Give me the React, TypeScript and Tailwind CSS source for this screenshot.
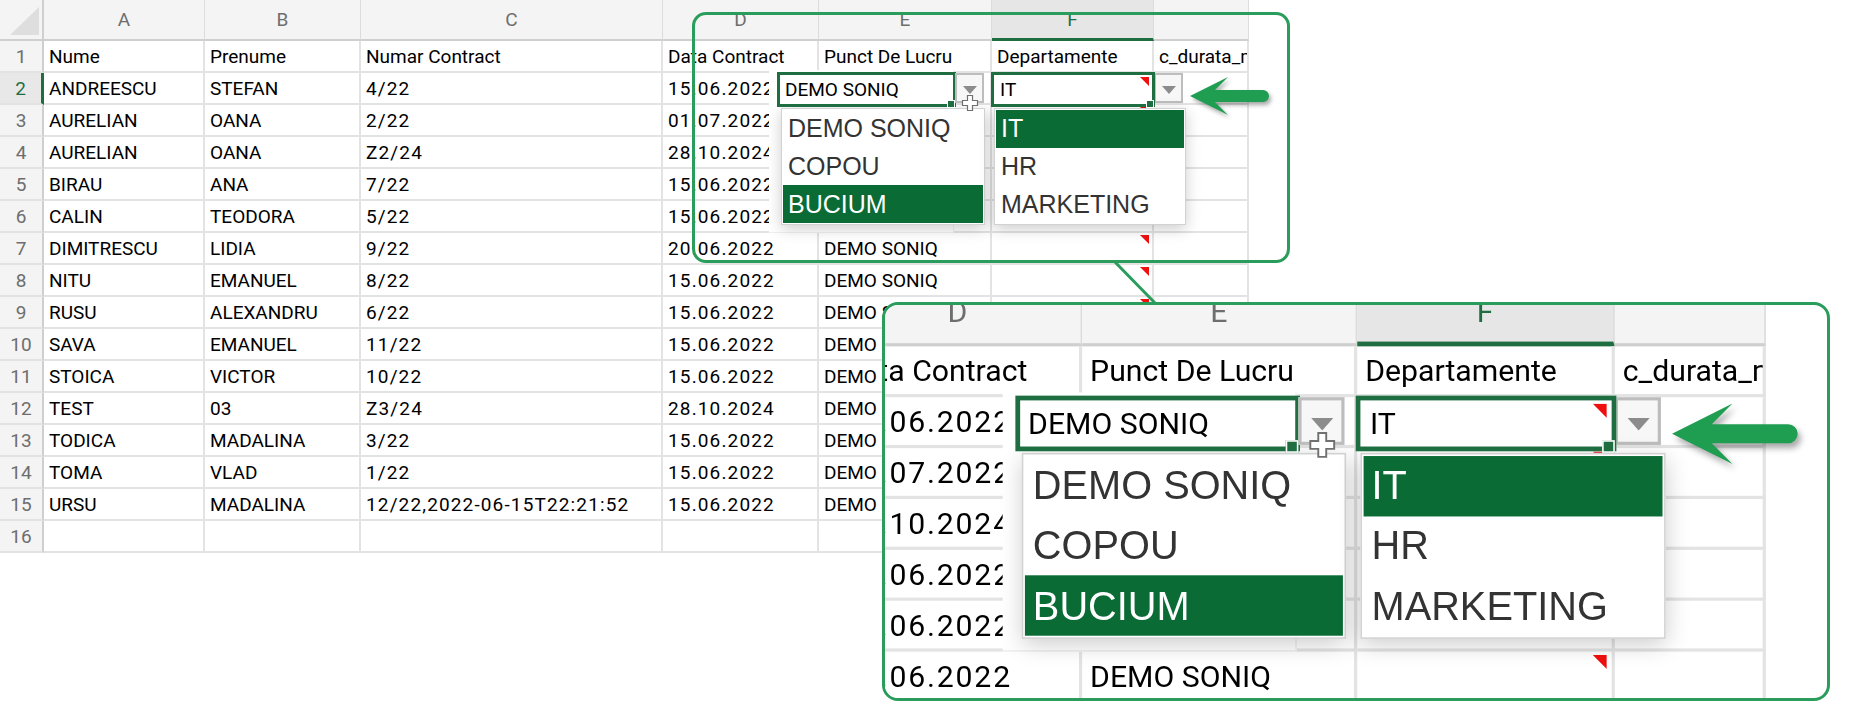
import React from 'react';

type Row = [string, string, string, string, string, string, string];

const rows: Row[] = [
  ['Nume', 'Prenume', 'Numar Contract', 'Data Contract', 'Punct De Lucru', 'Departamente', 'c_durata_munca'],
  ['ANDREESCU', 'STEFAN', '4/22', '15.06.2022', 'DEMO SONIQ', 'IT', ''],
  ['AURELIAN', 'OANA', '2/22', '01.07.2022', 'DEMO SONIQ', '', ''],
  ['AURELIAN', 'OANA', 'Z2/24', '28.10.2024', 'DEMO SONIQ', '', ''],
  ['BIRAU', 'ANA', '7/22', '15.06.2022', 'DEMO SONIQ', '', ''],
  ['CALIN', 'TEODORA', '5/22', '15.06.2022', 'DEMO SONIQ', '', ''],
  ['DIMITRESCU', 'LIDIA', '9/22', '20.06.2022', 'DEMO SONIQ', '', ''],
  ['NITU', 'EMANUEL', '8/22', '15.06.2022', 'DEMO SONIQ', '', ''],
  ['RUSU', 'ALEXANDRU', '6/22', '15.06.2022', 'DEMO SONIQ', '', ''],
  ['SAVA', 'EMANUEL', '11/22', '15.06.2022', 'DEMO SONIQ', '', ''],
  ['STOICA', 'VICTOR', '10/22', '15.06.2022', 'DEMO SONIQ', '', ''],
  ['TEST', '03', 'Z3/24', '28.10.2024', 'DEMO SONIQ', '', ''],
  ['TODICA', 'MADALINA', '3/22', '15.06.2022', 'DEMO SONIQ', '', ''],
  ['TOMA', 'VLAD', '1/22', '15.06.2022', 'DEMO SONIQ', '', ''],
  ['URSU', 'MADALINA', '12/22,2022-06-15T22:21:52', '15.06.2022', 'DEMO SONIQ', '', ''],
  ['', '', '', '', '', '', ''],
];

// G header letter is cropped out in the screenshot
const letters = ['A', 'B', 'C', 'D', 'E', 'F', ''];

function RedMark() {
  return <div className="absolute right-[3px] top-[2px] h-[9px] w-[9px] bg-[#f00f0f] [clip-path:polygon(0_0,100%_0,100%_100%)]" />;
}

function Handle() {
  return <div className="absolute -right-[2px] -bottom-[4px] h-[8px] w-[8px] bg-[#1e6e42] border border-white" />;
}

function DropButton() {
  return (
    <div className="-ml-px mt-px h-[30px] w-[29px] shrink-0 border-2 border-[#bdbdbd] bg-[#f7f7f7] flex justify-center pt-[11px]">
      <svg width="14" height="8" viewBox="0 0 14 8">
        <polygon points="0,0 14,0 7,8" fill="#8c8c8c" />
      </svg>
    </div>
  );
}

function List({ items, active, width }: { items: string[]; active: number; width: string }) {
  return (
    <div className={`h-[117px] bg-white border border-[#d2d2d2] shadow-[0_4px_14px_rgba(0,0,0,0.2)] p-px flex flex-col font-['Liberation_Sans',Arial,sans-serif] text-[25px] text-[#333333] ${width}`}>
      {items.map((it, i) => (
        <div key={it} className={`h-[38px] flex items-center pl-[5px] ${i === active ? 'bg-[#0a6b35] text-white' : ''}`}>
          {it}
        </div>
      ))}
    </div>
  );
}

function Overlays() {
  return (
    <>
      {/* pasted dropdown patch */}
      <div className="absolute left-[769px] top-[70px] h-[163px] w-[185px] bg-white border-r border-b border-[#f0f0f0]" />

      {/* E2 in-cell dropdown */}
      <div className="absolute left-[777px] top-[72px] flex flex-col">
        <div className="flex items-start">
          <div className="relative h-[35px] w-[179px] border-[3px] border-[#1e6e42] bg-white flex items-center pl-[5px] text-black">
            DEMO SONIQ
            <Handle />
          </div>
          <div className="relative">
            <DropButton />
            <svg className="absolute left-[5px] top-[22px]" width="18" height="18" viewBox="0 0 18 18">
              <path d="M6.5 1.5H11.5V6.5H16.5V11.5H11.5V16.5H6.5V11.5H1.5V6.5H6.5Z" fill="white" stroke="#707070" strokeWidth="1.2" />
            </svg>
          </div>
        </div>
        <div className="ml-[4px] mt-px">
          <List items={['DEMO SONIQ', 'COPOU', 'BUCIUM']} active={2} width="w-[204px]" />
        </div>
      </div>

      {/* F2 in-cell dropdown */}
      <div className="absolute left-[991px] top-[72px] flex flex-col">
        <div className="flex items-start">
          <div className="relative h-[35px] w-[164px] border-[3px] border-[#1e6e42] bg-white flex items-center pl-[6px] text-black">
            IT
            <RedMark />
            <Handle />
          </div>
          <DropButton />
        </div>
        <div className="ml-[3px] mt-px">
          <List items={['IT', 'HR', 'MARKETING']} active={0} width="w-[192px]" />
        </div>
      </div>

      {/* arrow */}
      <svg className="absolute left-[1188px] top-[76px] drop-shadow-[2px_3px_2px_rgba(0,0,0,0.35)]" width="82" height="40" viewBox="0 0 82 40">
        <path d="M2 20L40 1L27 14H75A6 6 0 0 1 75 26H27L40 39Z" fill="#1f9e52" />
      </svg>
    </>
  );
}

function Sheet() {
  return (
    <div className="relative w-[1249px] h-[553px] bg-white font-['Roboto','Lato',sans-serif] text-[19px] leading-none">
      <div className="grid grid-cols-[44px_161px_156px_302px_156px_173px_162px_95px] grid-rows-[41px_repeat(16,32px)]">
        <div className="bg-[#f4f4f4] border-r-2 border-b-2 border-[#cfcfcf]">
          <svg width="42" height="39" viewBox="0 0 42 39">
            <polygon points="10,35 39,7 39,35" fill="#dedede" />
          </svg>
        </div>
        {letters.map((l, i) =>
          l === 'F' ? (
            <div key={i} className="bg-[#e6e6e6] border-r border-[#dcdcdc] border-b-[3px] border-b-[#1e6e42] flex items-center justify-center text-[#1e6e42]">
              {l}
            </div>
          ) : (
            <div key={i} className="bg-[#f4f4f4] border-r border-[#dcdcdc] border-b-2 border-b-[#cfcfcf] flex items-center justify-center text-[#6e6e6e]">
              {l}
            </div>
          )
        )}
        {rows.map((r, i) => {
          const n = i + 1;
          return (
            <React.Fragment key={n}>
              {n === 2 ? (
                <div className="bg-[#e8e8e8] border-r-[3px] border-[#1e6e42] border-b-2 border-b-[#e3e3e3] flex items-center justify-center text-[#1e6e42]">
                  {n}
                </div>
              ) : (
                <div className="bg-[#f4f4f4] border-r-2 border-[#cfcfcf] border-b-2 border-b-[#e3e3e3] flex items-center justify-center text-[#6e6e6e]">
                  {n}
                </div>
              )}
              {r.map((v, c) => (
                <div
                  key={c}
                  className={`relative border-r-2 border-b-2 border-[#e3e3e3] flex items-center pl-[5px] whitespace-nowrap overflow-hidden text-black ${
                    n > 1 && (c === 2 || c === 3) ? 'tracking-[0.06em]' : ''
                  }`}
                >
                  {v}
                  {c === 5 && n >= 2 && n <= 15 && <RedMark />}
                </div>
              ))}
            </React.Fragment>
          );
        })}
      </div>
      <Overlays />
    </div>
  );
}

export default function App() {
  return (
    <div className="relative w-[1856px] h-[728px] overflow-hidden bg-white">
      <Sheet />

      {/* callout on the original */}
      <div className="absolute left-[692px] top-[12px] w-[598px] h-[251px] rounded-[14px] border-[3px] border-[#2a9d5c]" />
      <svg className="absolute left-[1110px] top-[258px]" width="50" height="48" viewBox="0 0 50 48">
        <line x1="4" y1="3" x2="45" y2="45" stroke="#2a9d5c" strokeWidth="3" />
      </svg>

      {/* magnified view */}
      <div className="absolute left-[882px] top-[302px] w-[948px] h-[399px] rounded-[16px] border-[3px] border-[#2a9d5c] overflow-hidden bg-white">
        <div className="origin-top-left scale-[1.59]">
          <div className="-translate-x-[695px] -translate-y-[15px]">
            <Sheet />
          </div>
        </div>
      </div>
    </div>
  );
}
